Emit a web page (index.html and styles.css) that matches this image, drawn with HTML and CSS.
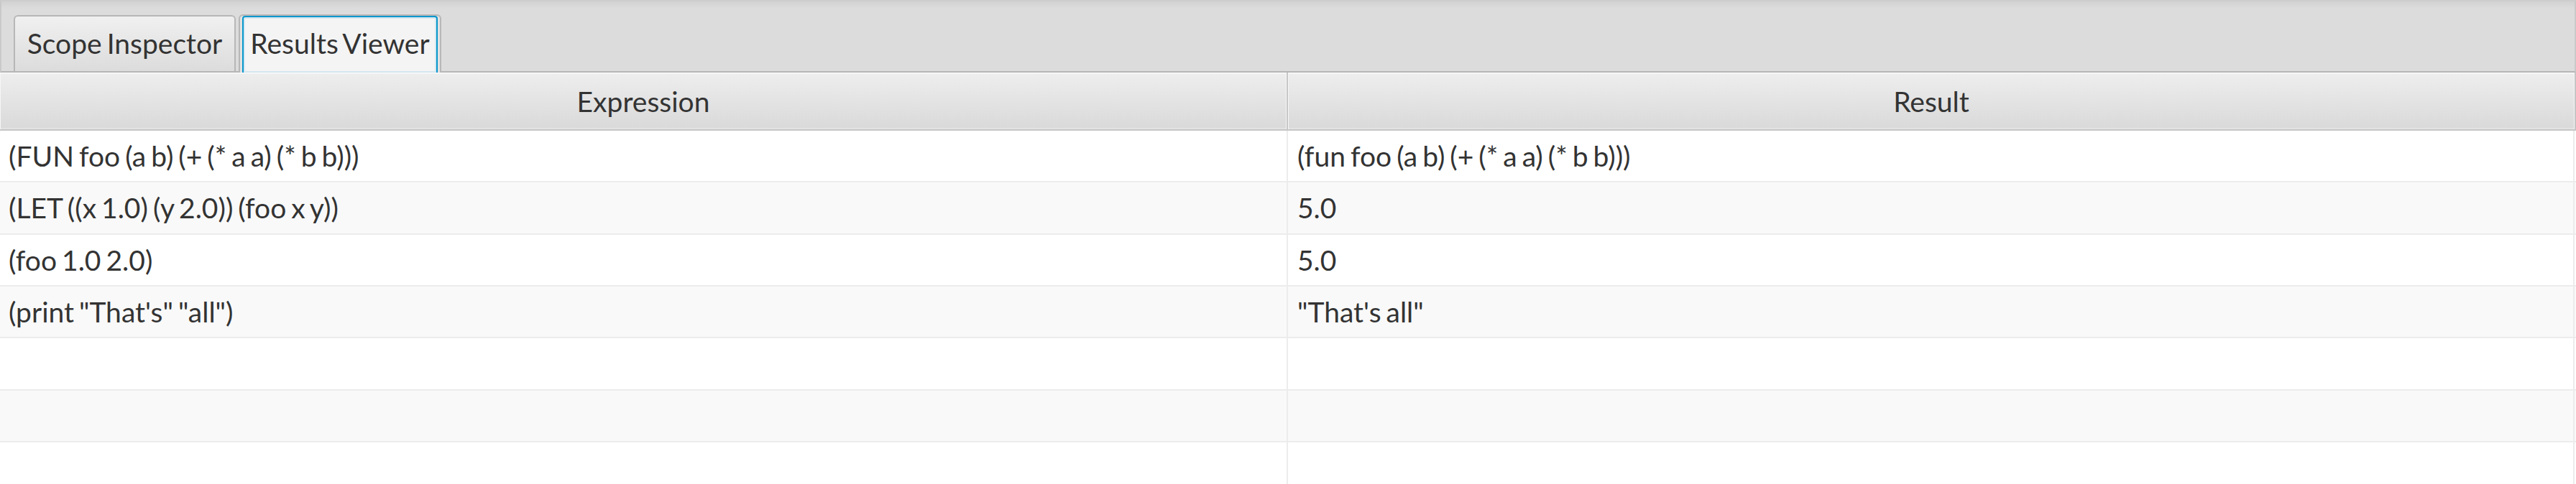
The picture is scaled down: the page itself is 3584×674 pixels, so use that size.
FILE: index.html
```html
<!DOCTYPE html>
<html>
<head>
<meta charset="utf-8">
<link rel="stylesheet" href="styles.css">
</head>
<body>
<div class="app">
  <div class="tab-header">
    <div class="tab">Scope Inspector</div>
    <div class="tab selected"><div class="tab-inner">Results Viewer</div></div>
  </div>
  <div class="table">
    <div class="thead">
      <div class="th c1">Expression</div>
      <div class="th c2">Result</div>
    </div>
    <div class="row">
      <div class="td c1">(FUN foo (a b) (+ (* a a) (* b b)))</div>
      <div class="td c2">(fun foo (a b) (+ (* a a) (* b b)))</div>
    </div>
    <div class="row odd">
      <div class="td c1">(LET ((x 1.0) (y 2.0)) (foo x y))</div>
      <div class="td c2">5.0</div>
    </div>
    <div class="row">
      <div class="td c1">(foo 1.0 2.0)</div>
      <div class="td c2">5.0</div>
    </div>
    <div class="row odd">
      <div class="td c1">(print "That's" "all")</div>
      <div class="td c2">"That's all"</div>
    </div>
    <div class="row">
      <div class="td c1"></div>
      <div class="td c2"></div>
    </div>
    <div class="row odd">
      <div class="td c1"></div>
      <div class="td c2"></div>
    </div>
    <div class="row">
      <div class="td c1"></div>
      <div class="td c2"></div>
    </div>
  </div>
</div>
</body>
</html>
```

FILE: styles.css
```css
* { box-sizing: border-box; }
html, body { margin: 0; padding: 0; background: #ffffff; }
body {
  font-family: Lato, "Liberation Sans", sans-serif;
  font-size: 39px;
  color: #333333;
  word-spacing: -3px;
}
.app {
  width: 3584px;
  height: 674px;
  overflow: hidden;
  display: flex;
  flex-direction: column;
}
.tab-header {
  height: 101px;
  flex: none;
  display: flex;
  align-items: flex-end;
  gap: 4px;
  padding-left: 17px;
  border-top: 2px solid #cdcdcd;
  border-left: 2px solid #c9c9c9;
  border-right: 2px solid #c9c9c9;
  border-bottom: 2px solid #b6b6b6;
  background: linear-gradient(to bottom, #d2d2d2 0, #dcdcdc 10px, #dcdcdc 100%);
}
.tab {
  width: 309px;
  height: 78px;
  display: flex;
  justify-content: center;
  padding-top: 13px;
  line-height: 48px;
  border: 2px solid #b7b7b7;
  border-bottom: none;
  border-radius: 6px 6px 0 0;
  background: linear-gradient(to bottom, #f0f0f0, #dcdcdc);
}
.tab.selected {
  width: 282px;
  height: 81px;
  margin-bottom: -2px;
  padding: 0 3px;
  background: #e2e2e2;
}
.tab-inner {
  flex: 1;
  display: flex;
  justify-content: center;
  padding-top: 12px;
  border: 2px solid #0596cc;
  border-bottom: none;
  border-radius: 4px 4px 0 0;
  box-shadow: inset 0 0 0 2px #d4e7f0;
  background: #f4f4f4;
}
.table {
  flex: 1;
  display: flex;
  flex-direction: column;
}
.thead {
  height: 81px;
  flex: none;
  display: flex;
  border-bottom: 2px solid #c6c6c6;
}
.th {
  display: flex;
  align-items: center;
  justify-content: center;
  line-height: 48px;
  background: linear-gradient(to bottom, #eeeeee, #d9d9d9);
  box-shadow: inset 0 1px 0 1px #f6f6f6, inset 0 -2px 0 0 #e3e3e3;
}
.th.c1 { width: 1792px; border-right: 2px solid #c6c6c6; }
.th.c2 { width: 1792px; border-right: 2px solid #c6c6c6; }
.row {
  height: 72.33px;
  flex: none;
  display: flex;
  background: #ffffff;
  border-bottom: 2px solid #ececec;
}
.row.odd { background: #f9f9f9; }
.td {
  display: flex;
  align-items: center;
  line-height: 48px;
  white-space: pre;
}
.td.c1 { width: 1792px; padding-left: 12px; border-right: 2px solid #ececec; }
.td.c2 { width: 1790px; padding-left: 13px; border-right: 2px solid #ececec; }
```
